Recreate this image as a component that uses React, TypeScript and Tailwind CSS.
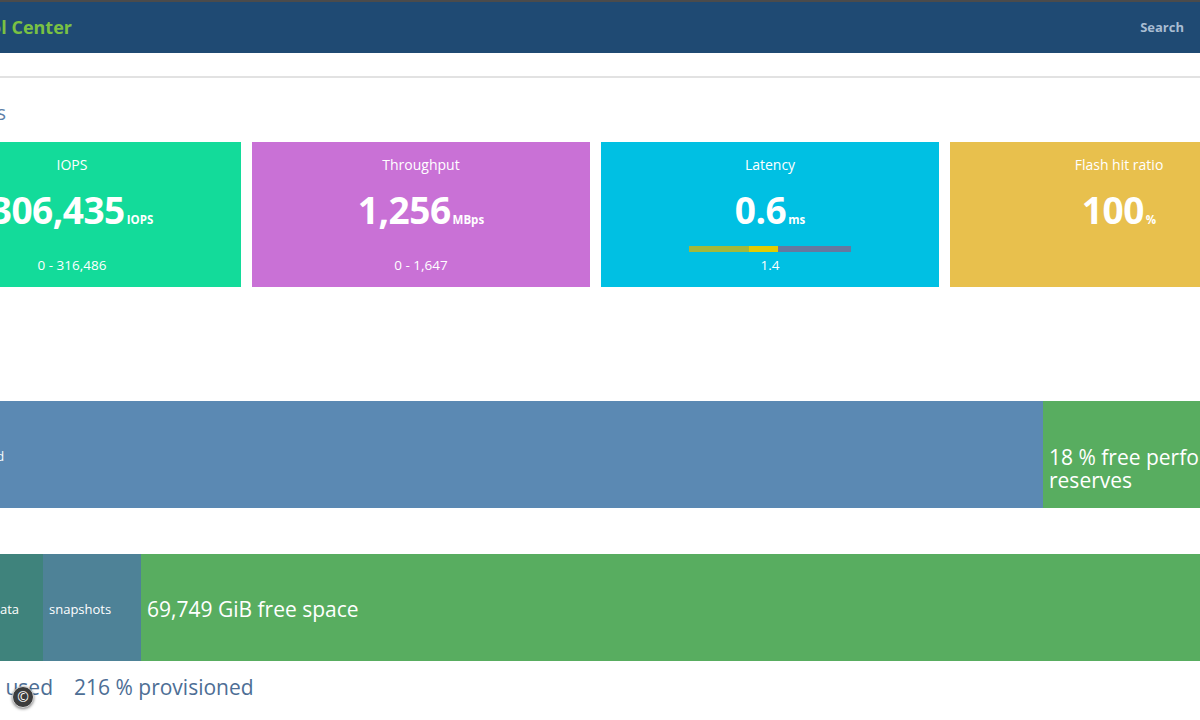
import React from "react";

type Card = {
  title: string;
  value: string;
  unit: string;
  range: string;
  bg: string;
  latency?: boolean;
};

const cards: Card[] = [
  { title: "IOPS", value: "306,435", unit: "IOPS", range: "0 - 316,486", bg: "bg-[#13db9a]" },
  { title: "Throughput", value: "1,256", unit: "MBps", range: "0 - 1,647", bg: "bg-[#c971d6]" },
  { title: "Latency", value: "0.6", unit: "ms", range: "1.4", bg: "bg-[#00c0e3]", latency: true },
  { title: "Flash hit ratio", value: "100", unit: "%", range: "", bg: "bg-[#e8c04d]" },
];

function StatCard({ card }: { card: Card }) {
  return (
    <div className={`flex h-[145px] w-[338px] shrink-0 flex-col items-center pt-[13px] text-white ${card.bg}`}>
      <div className="h-[20px] text-[14px] leading-[20px]">{card.title}</div>
      <div className="mt-[13px] flex h-[44px] items-baseline gap-[2px] leading-[44px]">
        <span className="text-[37px] font-bold tracking-[-0.5px]">{card.value}</span>
        <span className="text-[11.5px] font-bold">{card.unit}</span>
      </div>
      <div className="mt-[14px] flex flex-col items-center">
        {card.latency ? (
          <div className="flex h-[6px] w-[162px]">
            <div className="w-[60px] bg-[#a3b83a]" />
            <div className="w-[29px] bg-[#e2cc00]" />
            <div className="flex-1 bg-[#66789f]" />
          </div>
        ) : (
          <div className="h-[6px]" />
        )}
        <div className="mt-[4px] h-[18px] text-[13.5px] leading-[18px]">{card.range}</div>
      </div>
    </div>
  );
}

export default function App() {
  return (
    <div
      className="relative h-[720px] w-[1200px] overflow-hidden bg-white"
      style={{ fontFamily: "'Open Sans', sans-serif" }}
    >
      <div className="h-[2px] bg-[#4b4b4b]" />
      <header className="flex h-[51px] items-center justify-between bg-[#1f4a73]">
        <div className="-ml-[98px] w-[170px] whitespace-nowrap text-right text-[18px] font-bold text-[#7ac143]">
          Control Center
        </div>
        <div className="pr-[16px] text-[13px] font-bold text-[#a9bdd2]">Search</div>
      </header>
      <div className="h-[23px]" />
      <div className="h-[2px] bg-[#e2e2e2]" />

      <div className="-ml-[98px] w-[1400px]">
        <h2 className="mt-[21px] w-[104px] text-right text-[20px] leading-[28px] font-normal text-[#5d7fa8]">
          Statistics
        </h2>

        <div className="mt-[15px] flex gap-[11px] pl-[1px]">
          {cards.map((c) => (
            <StatCard key={c.title} card={c} />
          ))}
        </div>

        {/* performance */}
        <div className="mt-[114px] flex h-[107px] text-white">
          <div className="flex w-[1141px] items-center bg-[#5b89b3] pl-[45px] pt-[4px] text-[12px]">82 % used</div>
          <div className="flex w-[240px] items-center bg-[#58ad60] px-[6px] pt-[28px] text-[21px] leading-[23px]">
            18 % free performance reserves
          </div>
        </div>

        {/* capacity */}
        <div className="mt-[46px] flex h-[107px] text-white">
          <div className="flex w-[141px] items-center bg-[#3f837c] pl-[90px] pt-[4px] text-[13px]">data</div>
          <div className="flex w-[98px] items-center bg-[#4e8297] pl-[6px] pt-[4px] text-[13px]">snapshots</div>
          <div className="flex flex-1 items-center bg-[#58ad60] pl-[6px] pt-[4px] text-[21px]">69,749 GiB free space</div>
        </div>

        <div className="mt-[12px] flex text-[21px] leading-[28px] text-[#4d6e95]">
          <span className="w-[151px] shrink-0 overflow-hidden whitespace-nowrap text-right">1,288 GiB used</span>
          <span className="ml-[21px]">216 % provisioned</span>
        </div>
      </div>

      <div className="absolute left-[12px] top-[686px] flex h-[22px] w-[22px] items-center justify-center rounded-full border border-[#d8d8d8] bg-[#3c3c3c] text-[14px] leading-none text-white shadow-[0_1px_3px_rgba(0,0,0,0.5)]">
        ©
      </div>
    </div>
  );
}
